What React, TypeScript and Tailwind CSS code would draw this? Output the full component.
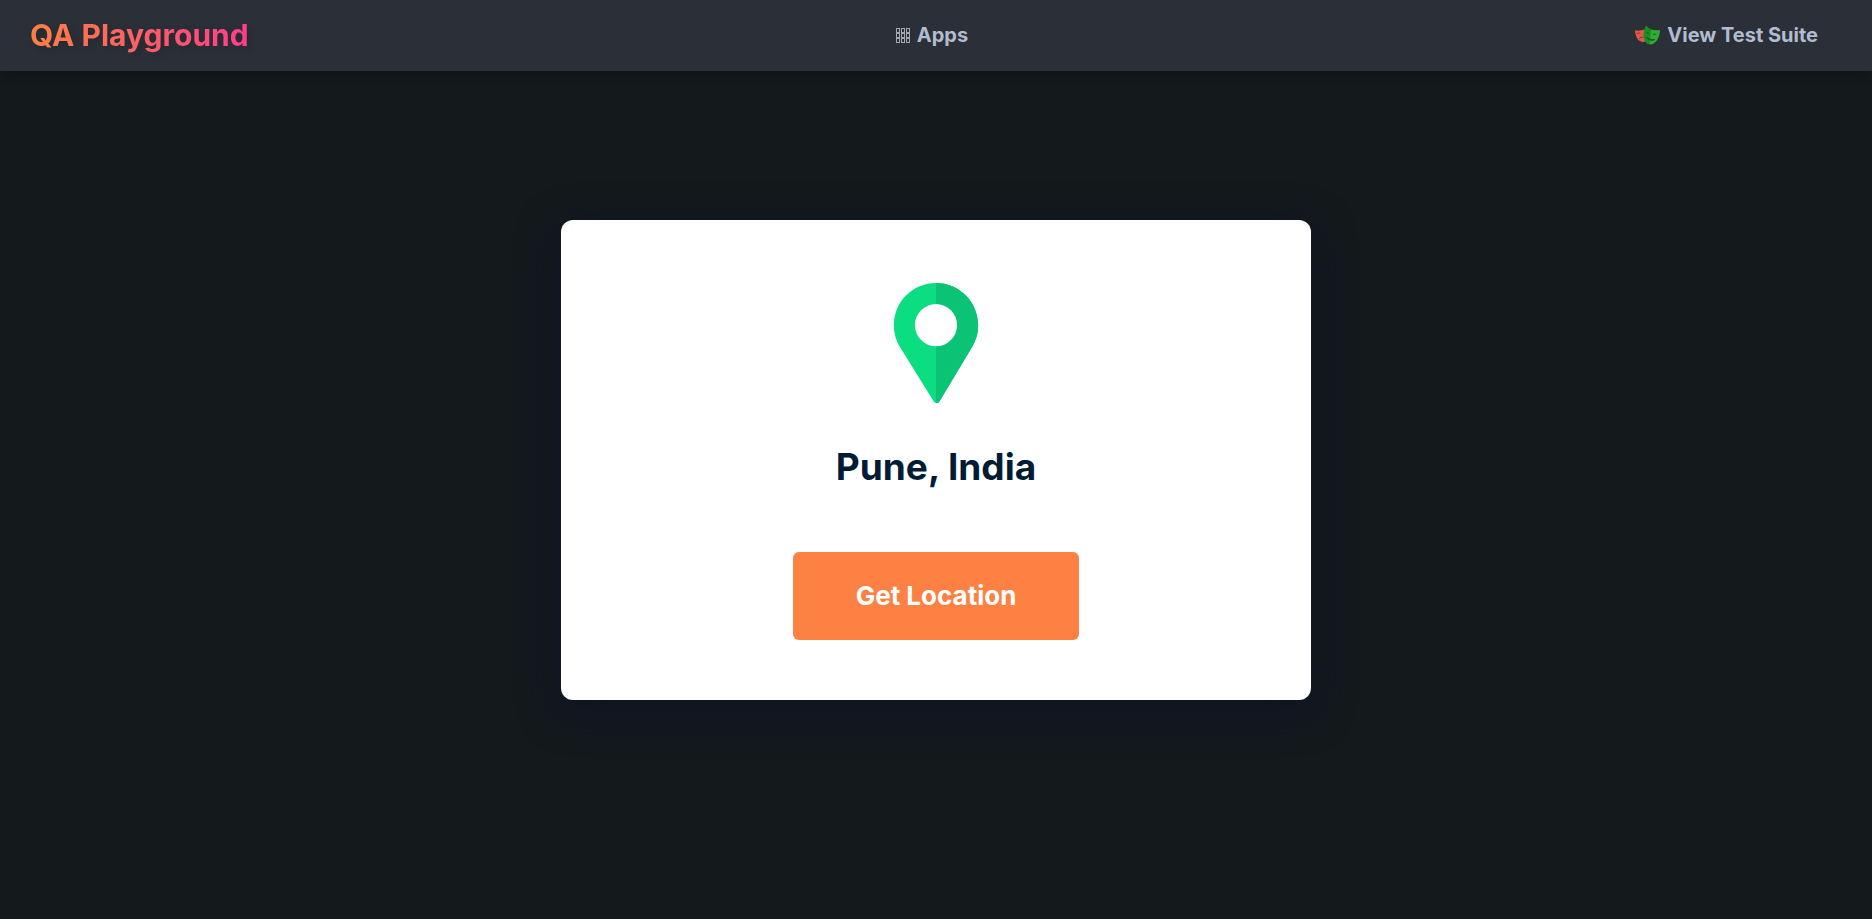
function AppsIcon() {
  return (
    <svg width="14" height="15" viewBox="0 0 14 15" fill="none" stroke="#a3a8b0" strokeWidth="1" aria-hidden="true">
      {[0, 5, 10].flatMap((x) =>
        [0, 5, 10].map((y) => <rect key={`${x}-${y}`} x={x + 0.5} y={y + 0.5} width="3" height="4" />),
      )}
    </svg>
  );
}

function MasksIcon() {
  return (
    <svg width="25" height="19" viewBox="0 0 25 19" aria-hidden="true">
      <path d="M0 4.300C3 5 6 4.600 9.500 3.600L10.500 15.300C5.500 17.500 0.500 13.500 0 4.300Z" fill="#e2574c" />
      <path d="M2 8C2.800 7 4 6.800 5.200 7.400M4.200 12.800C5 11.400 6.600 10.800 8.500 11.200" fill="none" stroke="#7d3436" strokeWidth="1" />
      <path d="M11 0C14 3.500 18.500 4.700 25 4C24.800 11 21.500 17.500 16 18.600C9 18.300 6.500 9.500 11 0Z" fill="#2ead33" />
      <path d="M11 0C12.500 1.800 14.300 2.900 16.200 3.500L14.500 18.200C8 16 6.800 8.600 11 0Z" fill="#1d8d22" />
      <path d="M11.300 7C12.300 6.400 13.500 6.700 14.300 7.700M17.800 8.800C18.800 7.900 20.100 7.900 21.100 8.800M11 11.200C13.500 13.300 16.500 14 19.800 13.300C18.500 15 13.500 14.600 11 11.200Z" fill="none" stroke="#155a1c" strokeWidth="1" />
    </svg>
  );
}

function LocationPin() {
  return (
    <svg className="size-[120px]" viewBox="0 0 512 512" role="img" aria-label="Location pin">
      <path
        d="M256 0C156.748 0 76 80.748 76 180c0 33.534 9.289 66.260 26.869 94.652l142.885 230.257c2.737 4.411 7.559 7.091 12.745 7.091h.119c5.231-.041 10.063-2.804 12.750-7.292L410.611 272.220C427.221 244.428 436 212.539 436 180 436 80.748 355.252 0 256 0Z"
        fill="#0bde81"
      />
      <path
        d="M256 0V512H258.618C263.849 511.959 268.681 509.196 271.368 504.708L410.611 272.220C427.221 244.428 436 212.539 436 180 436 80.748 355.252 0 256 0Z"
        fill="#0bc374"
      />
      <circle cx="256" cy="180" r="90" fill="#fff" />
    </svg>
  );
}

export default function App() {
  return (
    <div className="grid min-h-screen bg-[#14191c] font-['Inter',sans-serif]">
      <header className="z-10 col-start-1 row-start-1 grid grid-cols-[1fr_auto_1fr] items-center self-start bg-[#2b2f37] px-[30px] pt-[15px] pb-4 shadow-[0_4px_10px_rgba(0,0,0,0.2)]">
        <a href="#home" className="justify-self-start text-[30px] leading-[40px] font-bold drop-shadow-[3px_3px_3px_rgba(0,0,0,0.15)]">
          <span className="bg-[linear-gradient(90deg,#fc8142,#ff3d8b)] bg-clip-text text-transparent">QA Playground</span>
        </a>
        <a href="#apps" className="flex items-center gap-[7px] pr-2 text-[20px] leading-[30px] font-bold text-[#b1bccf]">
          <AppsIcon />
          Apps
        </a>
        <a href="#tests" className="flex items-center gap-[7px] justify-self-end pr-6 text-[20px] leading-[30px] font-bold text-[#b1bccf]">
          <MasksIcon />
          View Test Suite
        </a>
      </header>
      <main className="col-start-1 row-start-1 flex items-center justify-center py-[100px]">
        <section className="flex w-full max-w-[750px] flex-col items-center rounded-xl bg-white px-6 pt-[63px] pb-[60px] shadow-[0_10px_40px_rgba(13,20,40,0.8)]">
          <LocationPin />
          <h1 className="mt-[37px] text-[37px] leading-[54px] font-bold text-[#001c35]">Pune, India</h1>
          <button type="button" className="mt-[58px] h-[88px] w-[286px] rounded-md bg-[#fc8142] text-[26px] font-bold text-white">
            Get Location
          </button>
        </section>
      </main>
    </div>
  );
}
